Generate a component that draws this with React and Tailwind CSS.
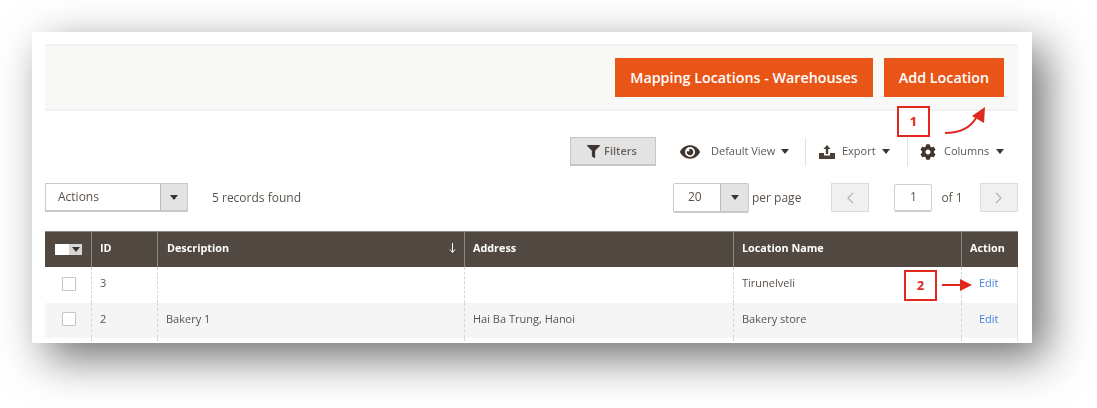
import React from "react";
import { FaFilter, FaEye, FaCog } from "react-icons/fa";

const Caret = ({ className = "" }) => (
  <svg width="8" height="5" viewBox="0 0 8 5" className={className}><path d="M0 0h8L4 5z" fill="#3b342e" /></svg>
);

const Upload = () => (
  <svg width="16" height="14" viewBox="0 0 16 14" fill="#4a4038">
    <path d="M8 0l3.6 4H9.200v5H6.800V4H4.400z" />
    <path d="M0 8h5v2.600h6V8h5v6H0z" />
  </svg>
);

const rows = [
  { id: "3", d: "", a: "", l: "Tirunelveli", bg: "bg-white" },
  { id: "2", d: "Bakery 1", a: "Hai Ba Trung, Hanoi", l: "Bakery store", bg: "bg-[#f5f5f5]" },
];

const cols = "grid grid-cols-[46px_66px_307px_269px_228px_57px]";
const dash = "border-l border-dashed border-[#d6d6d6]";

export default function App() {
  return (
    <div className="w-[1097px] h-[408px] bg-white pt-[32px] pl-[32px] overflow-hidden font-['Open_Sans',sans-serif]">
      <div className="relative w-[1000px] h-[311px] bg-white shadow-[14px_15px_42px_rgba(0,0,0,0.56)] overflow-hidden">
        <div className="blur-[0.45px] pl-[13px] pt-[12px] text-[#5a524b] whitespace-nowrap">
          <div className="w-[973px] h-[67px] bg-[#f8f8f6] border-y-2 border-[#f1f1f0] flex items-start justify-end gap-[11px] pt-[12px] pr-[14px]">
            <button className="w-[258px] h-[39px] bg-[#e95516] text-white text-[14.300px] font-semibold">Mapping Locations - Warehouses</button>
            <button className="w-[120px] h-[39px] bg-[#e95516] text-white text-[14.300px] font-semibold">Add Location</button>
          </div>

          <div className="h-[29px] mt-[26px] flex items-center text-[11px] text-[#5f5750]">
            <button className="ml-[525px] w-[86px] h-[29px] bg-[#e3e3e3] border border-[#c6c6c6] border-b-2 flex items-center justify-center gap-[4px] pr-[2px] font-semibold text-[#6a625b]">
              <FaFilter size={13} color="#3f3630" />Filters
            </button>
            <div className="ml-[24px] w-[126px] h-[28px] flex items-center border-r border-[#e3e3e3]">
              <FaEye size={20} color="#3f3630" />
              <span className="ml-[11px]">Default View</span>
              <Caret className="ml-[6px]" />
            </div>
            <div className="w-[102px] h-[28px] flex items-center pl-[13px] border-r border-[#e3e3e3]">
              <Upload />
              <span className="ml-[7px]">Export</span>
              <Caret className="ml-[6px]" />
            </div>
            <div className="h-[28px] flex items-center pl-[12px]">
              <FaCog size={16} color="#3f3630" />
              <span className="ml-[8px]">Columns</span>
              <Caret className="ml-[7px]" />
            </div>
          </div>

          <div className="h-[29px] mt-[17px] flex items-center text-[12px] text-[#5a524b]">
            <div className="w-[143px] h-[29px] flex border border-[#c9c9c9] border-b-2">
              <span className="flex-1 pl-[12px] flex items-center">Actions</span>
              <span className="w-[27px] bg-[#e3e3e3] border-l border-[#b8b8b8] flex items-center justify-center"><Caret /></span>
            </div>
            <span className="ml-[24px]">5 records found</span>
            <div className="ml-[372px] w-[76px] h-[30px] flex border border-[#c9c9c9] border-b-2 rounded-[2px]">
              <span className="flex-1 flex items-center pl-[14px]">20</span>
              <span className="w-[28px] bg-[#e3e3e3] border-l border-[#b8b8b8] flex items-center justify-center"><Caret /></span>
            </div>
            <span className="ml-[3px]">per page</span>
            <div className="ml-[30px] w-[38px] h-[29px] bg-[#f0f0f0] border border-[#dcdcdc] flex items-center justify-center">
              <svg width="8" height="12" viewBox="0 0 8 12" fill="none" stroke="#b3b3b3" strokeWidth="1.3"><path d="M7 1L2 6l5 5" /></svg>
            </div>
            <div className="ml-[25px] w-[38px] h-[28px] border border-[#cfcfcf] border-b-2 rounded-[2px] flex items-center justify-center">1</div>
            <span className="ml-[9px]">of 1</span>
            <div className="ml-[17px] w-[38px] h-[29px] bg-[#f0f0f0] border border-[#dcdcdc] flex items-center justify-center">
              <svg width="8" height="12" viewBox="0 0 8 12" fill="none" stroke="#b3b3b3" strokeWidth="1.3"><path d="M1 1l5 5-5 5" /></svg>
            </div>
          </div>

          <div className="mt-[19px] w-[973px]">
            <div className={`${cols} h-[36px] bg-[#514941] text-white text-[10.800px] font-bold border-t border-[#8f8880]`}>
              <div className="flex items-center pl-[10px]">
                <span className="w-[14px] h-[11px] bg-white" />
                <span className="w-[13px] h-[11px] bg-[#d6d6d6] flex items-center justify-center"><Caret /></span>
              </div>
              <div className="flex items-center pl-[8px] pb-[3px] border-l border-[#8f8880]">ID</div>
              <div className="flex items-center justify-between pl-[9px] pr-[8px] pb-[3px] border-l border-[#8f8880]">
                Description
                <svg width="7" height="10" viewBox="0 0 7 10" fill="none" stroke="#fff" strokeWidth="1"><path d="M3.500 0v9M1 6.500l2.500 3 2.500-3" /></svg>
              </div>
              <div className="flex items-center pl-[8px] pb-[3px] border-l border-[#8f8880]">Address</div>
              <div className="flex items-center pl-[8px] pb-[3px] border-l border-[#8f8880]">Location Name</div>
              <div className="flex items-center pl-[8px] pb-[3px] border-l border-[#8f8880]">Action</div>
            </div>
            {rows.map((r) => (
              <div key={r.id} className={`${cols} h-[35.500px] ${r.bg} text-[11px] text-[#5a524b] border-r border-[#e3e3e3]`}>
                <div className="flex items-center pl-[17px] pb-[2px]">
                  <span className="w-[14px] h-[14px] bg-white border border-[#c4c4c4] rounded-[1px]" />
                </div>
                <div className={`flex items-center pl-[8px] pb-[3px] ${dash}`}>{r.id}</div>
                <div className={`flex items-center pl-[8px] pb-[3px] ${dash}`}>{r.d}</div>
                <div className={`flex items-center pl-[8px] pb-[3px] ${dash}`}>{r.a}</div>
                <div className={`flex items-center pl-[8px] pb-[3px] ${dash}`}>{r.l}</div>
                <div className={`flex items-center pl-[17px] pb-[3px] text-[#4a7fdc] ${dash}`}>Edit</div>
              </div>
            ))}
            <div className={`${cols} h-[3px] border-r border-[#e3e3e3]`}>
              <div /><div className={dash} /><div className={dash} /><div className={dash} /><div className={dash} /><div className={dash} />
            </div>
          </div>
        </div>

        <div className="absolute left-[865px] top-[74px] w-[33px] h-[31px] bg-white border-[2px] border-[#e0281c] flex items-center justify-center text-[#e0281c] text-[13px] font-bold">1</div>
        <svg className="absolute left-[910px] top-[72px]" width="50" height="34" viewBox="0 0 50 34" fill="none">
          <path d="M3 29c12 0 24-3 31-15" stroke="#e0281c" strokeWidth="2" />
          <path d="M30 12l13-9-1 16z" fill="#e0281c" />
        </svg>
        <div className="absolute left-[872px] top-[238px] w-[33px] h-[31px] bg-white border-[2px] border-[#e0281c] flex items-center justify-center text-[#e0281c] text-[13px] font-bold">2</div>
        <svg className="absolute left-[910px] top-[245px]" width="32" height="16" viewBox="0 0 32 16" fill="none">
          <path d="M0 8h20" stroke="#e0281c" strokeWidth="2" />
          <path d="M18 2l12 6-12 6z" fill="#e0281c" />
        </svg>
      </div>
    </div>
  );
}
